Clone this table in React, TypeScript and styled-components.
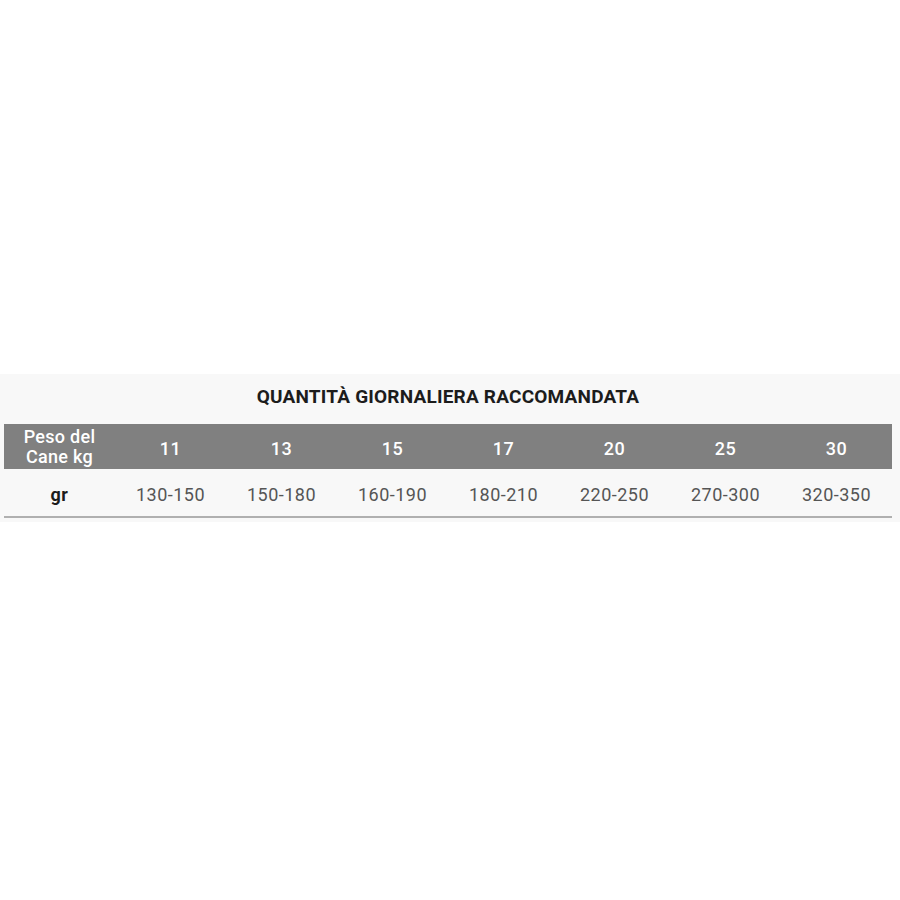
import React from "react";
import styled, { createGlobalStyle } from "styled-components";

const Global = createGlobalStyle`
  html, body { margin: 0; padding: 0; background: #ffffff; }
  body { font-family: Roboto, "Liberation Sans", sans-serif; }
`;

const Page = styled.div`
  width: 900px;
  height: 900px;
  display: flex;
  flex-direction: column;
  padding-top: 374px;
  box-sizing: border-box;
`;

const Band = styled.section`
  background: #f8f8f8;
  padding: 0 8px 4px 4px;
  display: flex;
  flex-direction: column;
`;

const Title = styled.h2`
  margin: 0;
  height: 50px;
  display: flex;
  align-items: center;
  justify-content: center;
  padding-bottom: 6px;
  box-sizing: border-box;
  font-size: 19px;
  font-weight: 700;
  color: #1c1c1c;
  letter-spacing: 0.2px;
`;

const Row = styled.div<{ $head?: boolean }>`
  display: grid;
  grid-template-columns: repeat(8, 1fr);
  align-items: center;
  height: ${(p) => (p.$head ? "45px" : "46px")};
  background: ${(p) => (p.$head ? "#808080" : "transparent")};
  border-bottom: ${(p) => (p.$head ? "none" : "2px solid #b0b0b0")};
  margin-top: ${(p) => (p.$head ? "0" : "1px")};
`;

const Cell = styled.div<{ $head?: boolean; $label?: boolean }>`
  text-align: center;
  font-size: 18px;
  line-height: 20px;
  letter-spacing: 0.5px;
  color: ${(p) => (p.$head ? "#ffffff" : p.$label ? "#1c1c1c" : "#555555")};
  font-weight: ${(p) => (p.$label ? 700 : p.$head ? 500 : 400)};
  padding-top: 4px;
`;

const HeadLabel = styled(Cell)`
  font-weight: 500;
  letter-spacing: 0.3px;
  padding-top: 0;
`;

const weights = ["11", "13", "15", "17", "20", "25", "30"];
const grams = ["130-150", "150-180", "160-190", "180-210", "220-250", "270-300", "320-350"];

export default function App() {
  return (
    <>
      <Global />
      <Page>
        <Band>
          <Title>QUANTITÀ GIORNALIERA RACCOMANDATA</Title>
          <Row $head>
            <HeadLabel $head>
              Peso del
              <br />
              Cane kg
            </HeadLabel>
            {weights.map((w) => (
              <Cell $head key={w}>
                {w}
              </Cell>
            ))}
          </Row>
          <Row>
            <Cell $label>gr</Cell>
            {grams.map((g) => (
              <Cell key={g}>{g}</Cell>
            ))}
          </Row>
        </Band>
      </Page>
    </>
  );
}
